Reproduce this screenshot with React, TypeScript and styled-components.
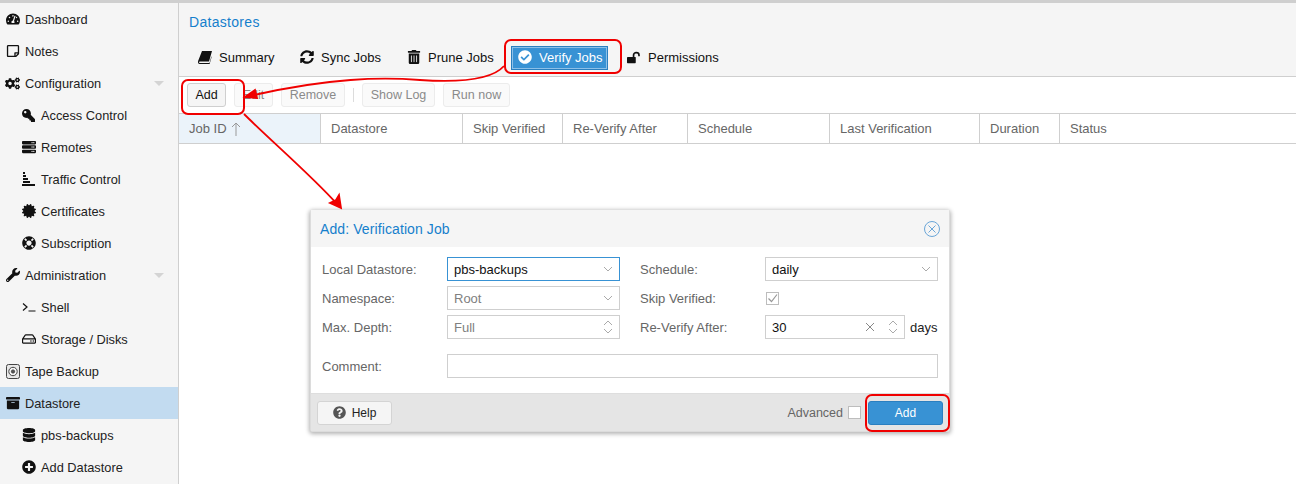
import * as React from "react"
import styled, { createGlobalStyle } from "styled-components"
import {
    FaTachometerAlt, FaRegStickyNote, FaCogs, FaKey, FaServer, FaCertificate, FaLifeRing, FaWrench,
    FaRegHdd, FaArchive, FaDatabase, FaPlusCircle, FaSyncAlt, FaTrashAlt, FaCheckCircle,
    FaQuestionCircle,
} from "react-icons/fa"

const GlobalStyle = createGlobalStyle`
    html, body {
        margin: 0;
        height: 484px;
        overflow: hidden;
        background: #fff;
        font-family: "Liberation Sans", Arial, sans-serif;
        font-size: 13px;
        color: #000;
    }
`

const Page = styled.div`
    position: relative;
    width: 1296px;
    height: 484px;
    border-top: 3px solid #cfcfcf;
    box-sizing: border-box;
    display: flex;
    overflow: hidden;
`

const Sidebar = styled.nav`
    width: 179px;
    flex: none;
    box-sizing: border-box;
    background: #f5f5f5;
    border-right: 1px solid #cfcfcf;
`

const NavRow = styled.div<{ $sub?: boolean; $selected?: boolean }>`
    height: 32px;
    box-sizing: border-box;
    display: flex;
    align-items: center;
    padding-left: ${p => p.$sub ? 21 : 5}px;
    gap: 5px;
    background: ${p => p.$selected ? '#c2dbf0' : 'transparent'};
    color: #222;
    font-size: 12.8px;
    position: relative;
`

const NavIcon = styled.span`
    width: 15px;
    height: 16px;
    flex: none;
    display: flex;
    align-items: center;
    justify-content: center;
    font-size: 14px;
    color: #111;
`

const FlippedKey = styled(FaKey)`
    transform: scaleX(-1);
`

const Caret = styled.span`
    position: absolute;
    left: 154px;
    top: 14px;
    border-left: 5px solid transparent;
    border-right: 5px solid transparent;
    border-top: 5px solid #d4d4d4;
`

const Main = styled.main`
    flex: 1;
    display: flex;
    flex-direction: column;
    min-width: 0;
`

const Header = styled.header`
    height: 74px;
    box-sizing: border-box;
    background: #f5f5f5;
    border-bottom: 1px solid #cfcfcf;
    padding: 11px 0 0 10px;
`

const Title = styled.div`
    color: #157fcc;
    font-size: 14px;
    letter-spacing: 0.3px;
    line-height: 17px;
`

const Tabs = styled.div`
    display: flex;
    align-items: center;
    margin-top: 15px;
    height: 24px;
`

const Tab = styled.div<{ $active?: boolean; $width: number; $pad: number }>`
    width: ${p => p.$width}px;
    height: 24px;
    box-sizing: border-box;
    flex: none;
    display: flex;
    align-items: center;
    padding: 0 0 2px ${p => p.$pad}px;
    gap: 7px;
    color: ${p => p.$active ? '#fff' : '#111'};
    background: ${p => p.$active ? '#3892d4' : 'transparent'};
    border: 1px solid ${p => p.$active ? '#2a7fc0' : 'transparent'};
    box-shadow: ${p => p.$active ? 'inset 0 0 0 1px #8cc0e8' : 'none'};
`

const TabIcon = styled.span`
    width: 14px;
    display: flex;
    justify-content: center;
    font-size: 14px;
`

const Toolbar = styled.div`
    height: 37px;
    box-sizing: border-box;
    border-bottom: 1px solid #cfcfcf;
    display: flex;
    align-items: center;
    padding-left: 8px;
    gap: 8px;
`

const ToolButton = styled.div<{ $width: number; $enabled?: boolean }>`
    width: ${p => p.$width}px;
    height: 24px;
    box-sizing: border-box;
    border: 1px solid ${p => p.$enabled ? '#cfcfcf' : '#ececec'};
    border-radius: 3px;
    background: ${p => p.$enabled ? '#f5f5f5' : '#fafafa'};
    color: ${p => p.$enabled ? '#111' : '#8a8a8a'};
    display: flex;
    align-items: center;
    justify-content: center;
    font-size: 12.5px;
`

const ToolSeparator = styled.div`
    width: 1px;
    height: 14px;
    background: #dcdcdc;
`

const GridHead = styled.div`
    height: 30px;
    box-sizing: border-box;
    border-bottom: 1px solid #cfcfcf;
    display: flex;
`

const HeadCell = styled.div<{ $width: number; $sorted?: boolean }>`
    width: ${p => p.$width}px;
    flex: none;
    box-sizing: border-box;
    border-right: 1px solid #cfcfcf;
    padding-left: 10px;
    display: flex;
    align-items: center;
    gap: 4px;
    color: #666;
    background: ${p => p.$sorted ? '#ebf3fa' : '#fff'};

    &:last-child {
        border-right: none;
    }
`

const Dialog = styled.section`
    position: absolute;
    left: 310px;
    top: 207px;
    width: 640px;
    height: 222px;
    box-sizing: border-box;
    border: 1px solid #dcdcdc;
    border-top: none;
    border-radius: 3px;
    background: #fff;
    box-shadow: 0 1px 4px 1px rgba(0, 0, 0, 0.3);
    display: flex;
    flex-direction: column;
`

const DialogHeader = styled.div`
    height: 37px;
    flex: none;
    background: #f5f5f5;
    display: flex;
    align-items: center;
    justify-content: space-between;
    padding: 0 8px 0 9px;
    color: #157fcc;
    font-size: 14px;
    letter-spacing: 0.1px;
`

const DialogBody = styled.div`
    flex: 1;
    padding: 10px 11px 0;
    display: grid;
    grid-template-columns: 298px 298px;
    grid-template-rows: 24px 24px 24px 34px;
    column-gap: 20px;
    row-gap: 5px;
    align-content: start;
`

const Field = styled.div<{ $wide?: boolean }>`
    display: flex;
    align-items: center;
    grid-column: ${p => p.$wide ? '1 / -1' : 'auto'};
    align-self: ${p => p.$wide ? 'end' : 'stretch'};
`

const Label = styled.label`
    width: 125px;
    flex: none;
    color: #666;
`

const Input = styled.div<{ $focused?: boolean; $disabled?: boolean }>`
    flex: 1;
    height: 24px;
    box-sizing: border-box;
    border: 1px solid ${p => p.$focused ? '#3892d4' : '#cfcfcf'};
    display: flex;
    align-items: center;
    padding: 0 6px;
    color: ${p => p.$disabled ? '#808080' : '#111'};
`

const InputValue = styled.span`
    flex: 1;
`

const Unit = styled.span`
    width: 28px;
    margin-left: 5px;
    flex: none;
    color: #222;
`

const CheckBox = styled.div<{ $inset?: number }>`
    width: 13px;
    height: 13px;
    box-sizing: border-box;
    border: 1px solid #bdbdbd;
    background: #fff;
    margin-left: ${p => p.$inset ?? 0}px;
    display: flex;
`

const DialogFooter = styled.div`
    height: 38px;
    flex: none;
    box-sizing: border-box;
    background: #e5e5e5;
    border-top: 1px solid #dedede;
    display: flex;
    align-items: center;
    padding: 0 6px;
`

const HelpButton = styled.div`
    width: 75px;
    height: 24px;
    box-sizing: border-box;
    border: 1px solid #d4d4d4;
    border-radius: 3px;
    background: #f5f5f5;
    color: #222;
    font-size: 12px;
    display: flex;
    align-items: center;
    justify-content: center;
    gap: 6px;
`

const Advanced = styled.div`
    margin-left: auto;
    display: flex;
    align-items: center;
    gap: 5px;
    color: #666;
    font-size: 12.5px;
`

const PrimaryButton = styled.div`
    width: 75px;
    height: 24px;
    margin-left: 7px;
    box-sizing: border-box;
    border: 1px solid #2a7fc0;
    border-radius: 3px;
    background: #3892d4;
    color: #fff;
    font-size: 12px;
    display: flex;
    align-items: center;
    justify-content: center;
`

const Callout = styled.div<{ $x: number; $y: number; $w: number; $h: number }>`
    position: absolute;
    left: ${p => p.$x}px;
    top: ${p => p.$y - 3}px;
    width: ${p => p.$w}px;
    height: ${p => p.$h}px;
    box-sizing: border-box;
    border: 2px solid #f00000;
    border-radius: 7px;
    pointer-events: none;
`

const ArrowLayer = styled.svg`
    position: absolute;
    left: 0;
    top: -3px;
    pointer-events: none;
`

const TrafficIcon = () => (
    <svg width="13" height="14" viewBox="0 0 13 14">
        <path d="M1 0h2v2H1zM1 3h3v2H1zM1 6h5v2H1zM1 9h7v2H1zM0 12h13v2H0z" fill="#111" />
    </svg>
)

const ShellIcon = () => (
    <svg width="14" height="12" viewBox="0 0 14 12" fill="none" stroke="#111" strokeWidth="1.2">
        <path d="M1 2.5l4 3.5-4 3.5M6.5 10H13.5" />
    </svg>
)

const TapeIcon = () => (
    <svg width="14" height="15" viewBox="0 0 14 15" fill="none" stroke="#444">
        <rect x=".5" y=".5" width="13" height="14" rx="2" fill="#e8e8e8" />
        <circle cx="7" cy="7.5" r="4.2" fill="#f5f5f5" />
        <circle cx="7" cy="7.5" r="1.6" fill="#555" />
    </svg>
)

const BookIcon = () => (
    <svg width="14" height="13" viewBox="0 0 14 13">
        <path d="M4 0h10l-3 10.5H1.8c-.5 0-.8.4-.8.8 0 .4.3.7.8.7h9.7l2-7v1.5L11.6 13H1.6C.6 13 0 12 0 11c0-.5.1-1 .3-1.5z" fill="#111" />
    </svg>
)

const UnlockIcon = () => (
    <svg width="16" height="13" viewBox="0 0 16 13">
        <path d="M0 6.5c0-.4.3-.7.7-.7h8.6c.4 0 .7.3.7.7v5.8c0 .4-.3.7-.7.7H.7c-.4 0-.7-.3-.7-.7z" fill="#111" />
        <path d="M7.5 6V3.6C7.5 2 8.8 1 10.6 1s3.1 1 3.1 2.6V5" fill="none" stroke="#111" strokeWidth="1.9" />
    </svg>
)

const Spinner = ({ color }: { color: string }) => (
    <svg width="10" height="14" viewBox="0 0 10 14" fill="none" stroke={color}>
        <path d="M1 5l4-4 4 4M1 9l4 4 4-4" />
    </svg>
)

const Chevron = () => (
    <svg width="10" height="6" viewBox="0 0 10 6" fill="none" stroke="#aaa">
        <path d="M1 1l4 4 4-4" />
    </svg>
)

const navItems: { label: string; icon: React.ReactNode; sub?: boolean; caret?: boolean; selected?: boolean }[] = [
    { label: 'Dashboard', icon: <FaTachometerAlt /> },
    { label: 'Notes', icon: <FaRegStickyNote /> },
    { label: 'Configuration', icon: <FaCogs size={15} />, caret: true },
    { label: 'Access Control', icon: <FlippedKey size={13} />, sub: true },
    { label: 'Remotes', icon: <FaServer />, sub: true },
    { label: 'Traffic Control', icon: <TrafficIcon />, sub: true },
    { label: 'Certificates', icon: <FaCertificate />, sub: true },
    { label: 'Subscription', icon: <FaLifeRing />, sub: true },
    { label: 'Administration', icon: <FaWrench />, caret: true },
    { label: 'Shell', icon: <ShellIcon />, sub: true },
    { label: 'Storage / Disks', icon: <FaRegHdd />, sub: true },
    { label: 'Tape Backup', icon: <TapeIcon /> },
    { label: 'Datastore', icon: <FaArchive />, selected: true },
    { label: 'pbs-backups', icon: <FaDatabase />, sub: true },
    { label: 'Add Datastore', icon: <FaPlusCircle />, sub: true },
]

const columns: { label: string; width: number }[] = [
    { label: 'Datastore', width: 142 },
    { label: 'Skip Verified', width: 100 },
    { label: 'Re-Verify After', width: 125 },
    { label: 'Schedule', width: 142 },
    { label: 'Last Verification', width: 150 },
    { label: 'Duration', width: 80 },
    { label: 'Status', width: 236 },
]

export default function App() {
    return (
        <>
            <GlobalStyle />
            <Page>
                <Sidebar>
                    {navItems.map(item => (
                        <NavRow key={item.label} $sub={item.sub} $selected={item.selected}>
                            <NavIcon>{item.icon}</NavIcon>
                            {item.label}
                            {item.caret && <Caret />}
                        </NavRow>
                    ))}
                </Sidebar>
                <Main>
                    <Header>
                        <Title>Datastores</Title>
                        <Tabs>
                            <Tab $width={102} $pad={8}><TabIcon><BookIcon /></TabIcon>Summary</Tab>
                            <Tab $width={107} $pad={8}><TabIcon><FaSyncAlt /></TabIcon>Sync Jobs</Tab>
                            <Tab $width={113} $pad={8}><TabIcon><FaTrashAlt /></TabIcon>Prune Jobs</Tab>
                            <Tab $width={97} $pad={6} $active><TabIcon><FaCheckCircle /></TabIcon>Verify Jobs</Tab>
                            <Tab $width={120} $pad={18}><TabIcon><UnlockIcon /></TabIcon>Permissions</Tab>
                        </Tabs>
                    </Header>
                    <Toolbar>
                        <ToolButton $width={39} $enabled>Add</ToolButton>
                        <ToolButton $width={39}>Edit</ToolButton>
                        <ToolButton $width={64}>Remove</ToolButton>
                        <ToolSeparator />
                        <ToolButton $width={73}>Show Log</ToolButton>
                        <ToolButton $width={67}>Run now</ToolButton>
                    </Toolbar>
                    <GridHead>
                        <HeadCell $width={142} $sorted>
                            Job ID
                            <svg width="10" height="14" viewBox="0 0 10 14" fill="none" stroke="#999">
                                <path d="M5 14V1M1 5l4-4 4 4" />
                            </svg>
                        </HeadCell>
                        {columns.map(c => <HeadCell key={c.label} $width={c.width}>{c.label}</HeadCell>)}
                    </GridHead>
                </Main>

                <Dialog>
                    <DialogHeader>
                        Add: Verification Job
                        <svg width="18" height="18" viewBox="0 0 18 18" fill="none" stroke="#6aa6d8">
                            <circle cx="9" cy="9" r="7.5" />
                            <path d="M5.5 5.5l7 7M12.5 5.5l-7 7" />
                        </svg>
                    </DialogHeader>
                    <DialogBody>
                        <Field>
                            <Label>Local Datastore:</Label>
                            <Input $focused><InputValue>pbs-backups</InputValue><Chevron /></Input>
                        </Field>
                        <Field>
                            <Label>Schedule:</Label>
                            <Input><InputValue>daily</InputValue><Chevron /></Input>
                        </Field>
                        <Field>
                            <Label>Namespace:</Label>
                            <Input $disabled><InputValue>Root</InputValue><Chevron /></Input>
                        </Field>
                        <Field>
                            <Label>Skip Verified:</Label>
                            <CheckBox $inset={1}>
                                <svg width="11" height="11" viewBox="0 0 11 11" fill="none" stroke="#999" strokeWidth="1.2">
                                    <path d="M1.5 5.5l3 3 5.5-7" />
                                </svg>
                            </CheckBox>
                        </Field>
                        <Field>
                            <Label>Max. Depth:</Label>
                            <Input $disabled><InputValue>Full</InputValue><Spinner color="#aaa" /></Input>
                        </Field>
                        <Field>
                            <Label>Re-Verify After:</Label>
                            <Input>
                                <InputValue>30</InputValue>
                                <svg width="10" height="10" viewBox="0 0 10 10" fill="none" stroke="#888" style={{ marginRight: 13 }}>
                                    <path d="M1 1l8 8M9 1l-8 8" />
                                </svg>
                                <Spinner color="#aaa" />
                            </Input>
                            <Unit>days</Unit>
                        </Field>
                        <Field $wide>
                            <Label>Comment:</Label>
                            <Input />
                        </Field>
                    </DialogBody>
                    <DialogFooter>
                        <HelpButton><FaQuestionCircle color="#555" size={13} />Help</HelpButton>
                        <Advanced>Advanced<CheckBox /></Advanced>
                        <PrimaryButton>Add</PrimaryButton>
                    </DialogFooter>
                </Dialog>

                <Callout $x={504} $y={39} $w={118} $h={35} />
                <Callout $x={181} $y={79} $w={64} $h={36} />
                <Callout $x={865} $y={394} $w={85} $h={38} />

                <ArrowLayer width="1296" height="484" viewBox="0 0 1296 484" fill="none" stroke="#f00000" strokeWidth="1.8">
                    <path d="M504 66C490 82 450 82 420 80C380 77 330 78 254 95" />
                    <path d="M245 97L255 90L257 98Z" fill="#f00000" />
                    <path d="M244 114C270 140 312 176 337 204" />
                    <path d="M341 208L330 203L336 200L339 195Z" fill="#f00000" />
                </ArrowLayer>
            </Page>
        </>
    )
}
